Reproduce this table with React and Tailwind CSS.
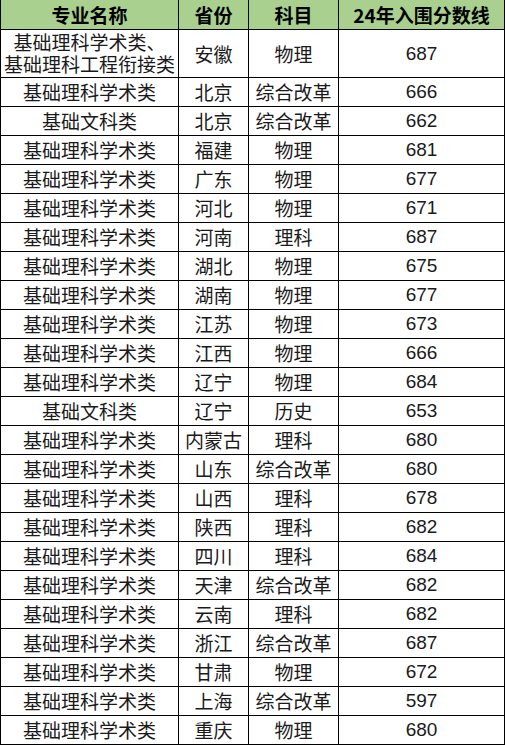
import React from "react";

const rows = [
  ["基础理科学术类、\n基础理科工程衔接类", "安徽", "物理", "687"],
  ["基础理科学术类", "北京", "综合改革", "666"],
  ["基础文科类", "北京", "综合改革", "662"],
  ["基础理科学术类", "福建", "物理", "681"],
  ["基础理科学术类", "广东", "物理", "677"],
  ["基础理科学术类", "河北", "物理", "671"],
  ["基础理科学术类", "河南", "理科", "687"],
  ["基础理科学术类", "湖北", "物理", "675"],
  ["基础理科学术类", "湖南", "物理", "677"],
  ["基础理科学术类", "江苏", "物理", "673"],
  ["基础理科学术类", "江西", "物理", "666"],
  ["基础理科学术类", "辽宁", "物理", "684"],
  ["基础文科类", "辽宁", "历史", "653"],
  ["基础理科学术类", "内蒙古", "理科", "680"],
  ["基础理科学术类", "山东", "综合改革", "680"],
  ["基础理科学术类", "山西", "理科", "678"],
  ["基础理科学术类", "陕西", "理科", "682"],
  ["基础理科学术类", "四川", "理科", "684"],
  ["基础理科学术类", "天津", "综合改革", "682"],
  ["基础理科学术类", "云南", "理科", "682"],
  ["基础理科学术类", "浙江", "综合改革", "687"],
  ["基础理科学术类", "甘肃", "物理", "672"],
  ["基础理科学术类", "上海", "综合改革", "597"],
  ["基础理科学术类", "重庆", "物理", "680"],
];

const cjk = { fontFamily: '"Noto Sans CJK SC", "Liberation Sans", sans-serif' };
const num = { fontFamily: '"Liberation Sans", "Noto Sans CJK SC", sans-serif' };

export default function App() {
  return (
    <div className="w-[505px] h-[745px] bg-white overflow-hidden">
      <table className="w-[504px] border-collapse table-fixed text-[19px] text-[#1a1a1a]" style={cjk}>
        <colgroup>
          <col className="w-[178px]" />
          <col className="w-[70px]" />
          <col className="w-[90px]" />
          <col className="w-[166px]" />
        </colgroup>
        <thead>
          <tr className="h-[29px] bg-[#a9d08e]">
            <th className="border-x border-b border-black p-0 font-bold text-black leading-none">专业名称</th>
            <th className="border-x border-b border-black p-0 font-bold text-black leading-none">省份</th>
            <th className="border-x border-b border-black p-0 font-bold text-black leading-none">科目</th>
            <th className="border-x border-b border-black p-0 font-bold text-black leading-none">24年入围分数线</th>
          </tr>
        </thead>
        <tbody>
          {rows.map((r, i) => (
            <tr key={i} className={i === 0 ? "h-[48px]" : "h-[29px]"}>
              <td className="border border-black p-0 text-center leading-[22px] whitespace-pre-line">{r[0]}</td>
              <td className="border border-black p-0 text-center leading-none">{r[1]}</td>
              <td className="border border-black p-0 text-center leading-none">{r[2]}</td>
              <td className="border border-black p-0 text-center leading-none" style={num}>{r[3]}</td>
            </tr>
          ))}
        </tbody>
      </table>
    </div>
  );
}
